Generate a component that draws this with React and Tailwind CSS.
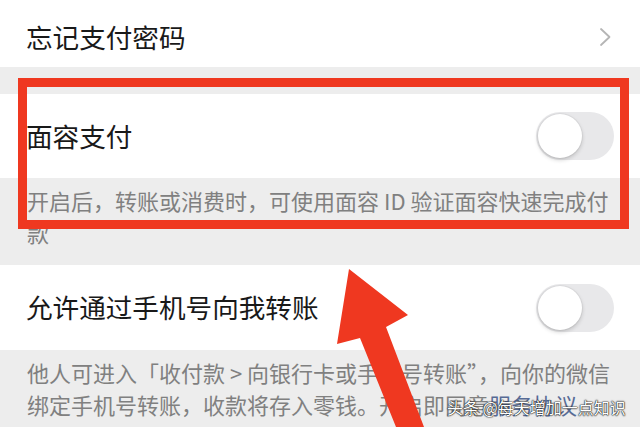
import React from 'react'

const cjk = { fontFamily: '"Noto Sans CJK SC", "Noto Sans", sans-serif' }

function Toggle() {
  return (
    <div className="w-[78px] h-[48px] rounded-full bg-[#e8e8ea] p-[2px] flex items-center">
      <div className="w-[44px] h-[44px] rounded-full bg-white shadow-[0_2px_4px_rgba(0,0,0,0.18),0_0_0_1px_rgba(0,0,0,0.04)]" />
    </div>
  )
}

export default function App() {
  return (
    <div className="relative w-[640px] h-[427px] overflow-hidden bg-[#ededed]" style={cjk}>
      <div className="flex flex-col">
        {/* 忘记支付密码 */}
        <div className="h-[67px] bg-white flex items-center justify-between pl-[26px] pr-[28px] pt-[7px]">
          <span className="text-[26.6px] text-[#191919] leading-none">忘记支付密码</span>
          <svg width="13" height="20" viewBox="0 0 13 20" fill="none">
            <path d="M2 2 L10.5 10 L2 18" stroke="#b5b5b5" strokeWidth="1.8" strokeLinecap="round" strokeLinejoin="round" />
          </svg>
        </div>

        <div className="h-[27px]" />

        {/* 面容支付 */}
        <div className="h-[84px] bg-white flex items-center justify-between pl-[26px] pr-[26px]">
          <span className="text-[26.6px] text-[#191919] leading-none">面容支付</span>
          <Toggle />
        </div>
        <div className="h-[87px] pl-[27px] pt-[6px] text-[22px] leading-[32px] text-[#808080] whitespace-nowrap">
          <div>开启后，转账或消费时，可使用面容 ID 验证面容快速完成付</div>
          <div>款</div>
        </div>

        {/* 允许通过手机号向我转账 */}
        <div className="h-[85px] bg-white flex items-center justify-between pl-[26px] pr-[26px]">
          <span className="text-[26.6px] text-[#191919] leading-none">允许通过手机号向我转账</span>
          <Toggle />
        </div>
        <div className="pl-[27px] pt-[6px] text-[22px] leading-[32px] text-[#808080] whitespace-nowrap">
          <div>他人可进入「收付款 &gt; 向银行卡或手机号转账”，向你的微信</div>
          <div>
            绑定手机号转账，收款将存入零钱。开启即同意<span className="text-[#576b95]">服务协议</span>
          </div>
        </div>
      </div>

      {/* red highlight box */}
      <div className="absolute left-[18px] top-[78px] w-[611px] h-[151px] border-[9px] border-[#ef3820]" />

      {/* red arrow */}
      <svg className="absolute left-0 top-0" width="640" height="427" viewBox="0 0 640 427">
        <polygon
          points="349,269 408,315 386,327 424,427 396,427 360,338 337,344"
          fill="#ef3820"
        />
      </svg>

      {/* watermark */}
      <div className="absolute left-[447px] top-[396px] text-[16px] leading-[22px] text-white whitespace-nowrap [text-shadow:0_0_1px_#111,0_0_1px_#111,0_0_2px_#333]">
        头条 @每天增加一点知识
      </div>
    </div>
  )
}
